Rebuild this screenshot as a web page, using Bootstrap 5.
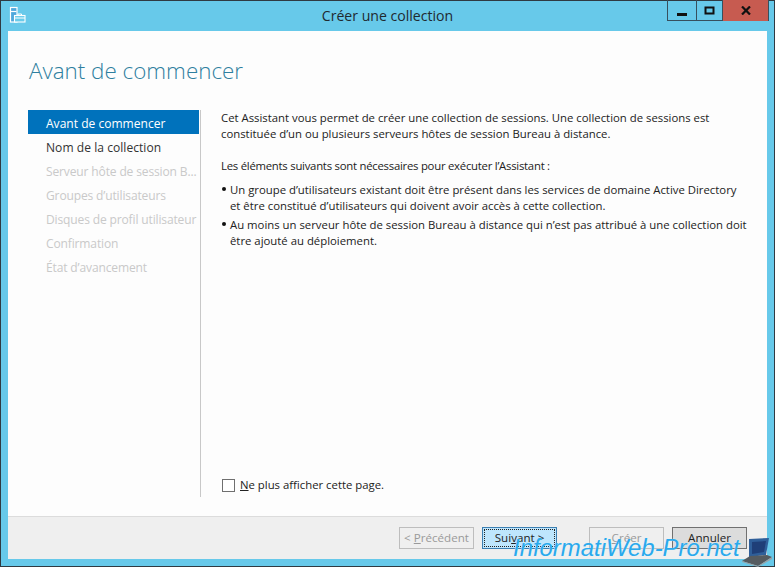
<!DOCTYPE html>
<html lang="fr">
<head>
<meta charset="utf-8">
<title>Créer une collection</title>
<link href="https://cdn.jsdelivr.net/npm/bootstrap@5.3.0/dist/css/bootstrap.min.css" rel="stylesheet">
<style>
html,body{margin:0;width:775px;height:567px;overflow:hidden;background:#69cbea}
body{font-family:"Open Sans","Noto Sans",sans-serif;font-size:11.35px;color:#222;line-height:16px}
.frame{width:775px;height:567px;border:1px solid #2f3a42;background:#67c9ea;position:relative}
.titlebar{height:30px;padding-left:7px}
.wintitle{left:0;right:0;top:6px;position:absolute;text-align:center;font-size:14.1px;line-height:18px;color:#1f2a30}
.ctrls{margin-right:5px;height:21px;margin-top:-1px;border:1px solid #37505e;border-top:0}
.ctrl{width:28px;height:21px}
.ctrl+.ctrl{border-left:1px solid #37505e}
.ctrl.wide{width:26px}
.ctrl.close{width:46px;background:#c75b50}
.client{margin:0 7px 7px 7px;height:528px;background:#fdfdfd}
.bodyarea{height:485px}
.heading{font-size:22.4px;line-height:32px;color:#2f7f9f;font-weight:300;padding:24px 0 0 21px;height:77px}
.columns{height:389px;padding-left:20px}
.stepnav{width:172px;border-right:1px solid #c8c8c8;height:387px;margin-top:2px;box-sizing:content-box}
.stepitem{width:171px;height:24px;line-height:28px;padding-left:18px;white-space:nowrap;overflow:hidden;font-size:12.05px}
.stepitem.current{background:#0072bc;color:#fff}
.stepitem.off{color:#c9c9c9;letter-spacing:-.15px}
.stepitem.on{color:#333;letter-spacing:.04px}
.pane{padding:0 0 0 20px;width:553px;height:389px}
.pane p{margin:0}
.para1{margin-top:2px!important}
.para2{margin-top:16px!important;margin-bottom:8px!important;letter-spacing:-.25px}
.pane ul{list-style:none;padding:0;margin:0}
.pane li{position:relative;padding-left:9px;margin-bottom:3px}
.pane li:first-child{padding-right:16px}
.pane li::before{content:"";position:absolute;left:1px;top:5px;width:4px;height:4px;border-radius:50%;background:#111}
.nomore{margin-top:auto;margin-bottom:4px;gap:5px;margin-left:1px}
.boxmark{width:13px;height:13px;border:1px solid #6f6f6f;background:#fff;flex:none}
.footerbar{height:43px;background:#efefef;border-top:1px solid #dcdcdc;padding:10px 20px 0 0}
.winbtn{width:75px;height:22px;border:1px solid #adadad;background:#efefef;color:#222;font-size:11.6px;line-height:20px;text-align:center;padding:0;border-radius:0}
.winbtn:disabled{color:#9a9a9a;opacity:1;background:#efefef;border-color:#bdbdbd}
.winbtn.primary{background:#bee6fd;border-color:#3c7fb1;outline:1px dotted #222;outline-offset:-3px}
.winbtn.cancel{background:#dcdcdc;border-color:#707070}
.gap8{margin-right:8px}
.gap33{margin-right:32px}
.brand{position:absolute;left:513px;top:533px;font-family:"Liberation Sans",sans-serif;font-style:italic;font-size:23.9px;line-height:30px;color:#2aa9ec;white-space:nowrap;text-shadow:0 0 1px #dff4ff}
.laptop{position:absolute;left:741px;top:537px}
</style>
</head>
<body>
<div class="frame d-flex flex-column">
  <div class="titlebar d-flex justify-content-between align-items-start flex-shrink-0">
    <svg class="mt-1" width="18" height="18" viewBox="0 0 18 18" fill="none" stroke="#fff" stroke-width="1.2"><rect x="2.5" y="2.5" width="6.5" height="14.5" fill="#4fa8dc"/><path d="M3 6.5h5.5"/><rect x="6.5" y="10.5" width="10.5" height="6.5" fill="#69cbea" stroke-width="1.1"/><path d="M10 10.5V9h3.5v1.5" stroke-width="1"/><path d="M6.5 13h10.5" stroke-width="1"/></svg>
    <div class="wintitle">Créer une collection</div>
    <div class="ctrls d-flex">
      <div class="ctrl d-flex align-items-center justify-content-center"><svg width="12" height="12" viewBox="0 0 12 12"><rect x="1" y="8" width="10" height="3" fill="#111"/></svg></div>
      <div class="ctrl wide d-flex align-items-center justify-content-center"><svg width="12" height="10" viewBox="0 0 12 10"><rect x="1.5" y="1.5" width="8" height="6" fill="none" stroke="#111" stroke-width="2"/></svg></div>
      <div class="ctrl close d-flex align-items-center justify-content-center"><svg width="10" height="9" viewBox="0 0 10 9"><path d="M1 .5l8 8M9 .5l-8 8" stroke="#111" stroke-width="2.2"/></svg></div>
    </div>
  </div>
  <div class="client d-flex flex-column">
    <div class="bodyarea d-flex flex-column">
      <div class="heading">Avant de commencer</div>
      <div class="columns d-flex">
        <div class="stepnav flex-shrink-0">
          <div class="stepitem current">Avant de commencer</div>
          <div class="stepitem on">Nom de la collection</div>
          <div class="stepitem off">Serveur hôte de session B...</div>
          <div class="stepitem off">Groupes d’utilisateurs</div>
          <div class="stepitem off">Disques de profil utilisateur</div>
          <div class="stepitem off">Confirmation</div>
          <div class="stepitem off">État d’avancement</div>
        </div>
        <div class="pane d-flex flex-column">
          <p class="para1">Cet Assistant vous permet de créer une collection de sessions. Une collection de sessions est constituée d’un ou plusieurs serveurs hôtes de session Bureau à distance.</p>
          <p class="para2">Les éléments suivants sont nécessaires pour exécuter l’Assistant :</p>
          <ul>
            <li>Un groupe d’utilisateurs existant doit être présent dans les services de domaine Active Directory et être constitué d’utilisateurs qui doivent avoir accès à cette collection.</li>
            <li>Au moins un serveur hôte de session Bureau à distance qui n’est pas attribué à une collection doit être ajouté au déploiement.</li>
          </ul>
          <div class="nomore d-flex align-items-center"><span class="boxmark"></span><span><u>N</u>e plus afficher cette page.</span></div>
        </div>
      </div>
    </div>
    <div class="footerbar d-flex justify-content-end align-items-start mt-auto">
      <button class="btn winbtn gap8" disabled>&lt; <u>P</u>récédent</button>
      <button class="btn winbtn primary gap33">Sui<u>v</u>ant &gt;</button>
      <button class="btn winbtn gap8" disabled><u>C</u>réer</button>
      <button class="btn winbtn cancel">Annuler</button>
    </div>
  </div>
</div>
<div class="brand">InformatiWeb-Pro.net</div>
<svg class="laptop" width="34" height="30" viewBox="0 0 34 30"><path d="M8 2l20-1-3 17-17 2z" fill="#2f5f9a"/><path d="M11 5l14-1-2 11-12 2z" fill="#1f3f78"/><path d="M1 24l8-5 17-1 5 2-14 9z" fill="#555b60"/><path d="M1 24l16 5 14-9v2l-14 8-16-5z" fill="#9aa0a4"/></svg>
</body>
</html>
